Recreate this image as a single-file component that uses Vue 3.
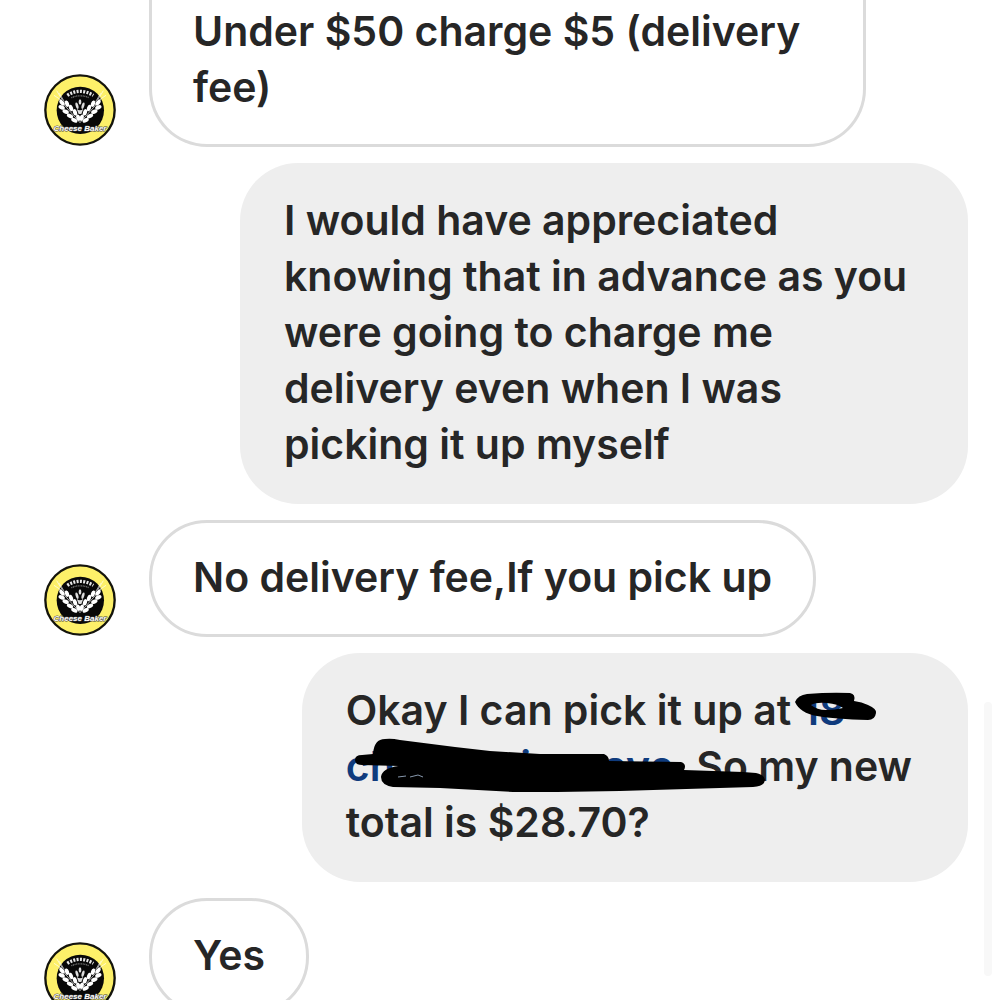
<template>
  <main class="chat">
    <div v-for="msg in messages" :key="msg.id" class="row" :class="msg.from">
      <svg v-if="msg.from === 'shop'" class="avatar" viewBox="0 0 216 216" role="img" aria-label="Cheese Baker">
        <circle cx="108" cy="108" r="104" fill="#fdf069" stroke="#14140c" stroke-width="7" />
        <circle cx="109" cy="109" r="71" fill="#080808" />
        <!-- crown of grains -->
        <path d="M70 64 Q108 40 148 64" fill="none" stroke="#e8e8e8" stroke-width="10" stroke-dasharray="6 4" />
        <path d="M82 71 Q108 60 135 71" fill="none" stroke="#777" stroke-width="4" stroke-dasharray="3 2" />
        <!-- wheat ears, the right one mirrored -->
        <g v-for="side in ears" :key="side" :transform="side" fill="#fff">
          <path d="M108 146 L46 76 M54 80 L30 64 M55 78 L38 50 M61 83 L46 58" stroke="#fff" stroke-width="2" fill="none" />
          <ellipse
            v-for="leaf in leaves"
            :key="leaf.join()"
            :cx="leaf[0]"
            :cy="leaf[1]"
            rx="10"
            ry="6"
            :transform="`rotate(${leaf[2]} ${leaf[0]} ${leaf[1]})`"
          />
        </g>
        <!-- small centre ear -->
        <g fill="#ddd">
          <ellipse cx="108" cy="84" rx="4" ry="8" />
          <ellipse cx="99" cy="95" rx="4" ry="10" transform="rotate(-15 99 95)" />
          <ellipse cx="117" cy="95" rx="4" ry="10" transform="rotate(15 117 95)" />
          <path d="M98 104 Q108 114 118 104 L112 120 H104 Z" />
        </g>
        <text x="108" y="172" class="brand" text-anchor="middle">Cheese Baker</text>
      </svg>

      <div class="bubble" :class="{ cut: msg.cut, address: msg.redacted }">
        <template v-if="msg.redacted">Okay I can pick it up at <a href="#" @click.prevent>18<br>chnnnnninm ave</a>. So my new<br>total is $28.70?
          <svg class="scribble" viewBox="0 0 664 229" aria-hidden="true">
            <g transform="translate(-304 -654)">
              <path
                fill-rule="evenodd"
                d="M795 703 Q798 696 807 695 Q830 693 850 694 Q856 695 854 702 Q862 703 868 706 Q877 710 876 714 Q875 721 868 721 Q835 720 817 717 Q800 714 795 703 Z
                   M811 706 Q816 703 827 704 Q838 705 843 709 Q835 711 826 711 Q817 711 811 706 Z"
              />
              <path
                d="M355 761 Q355 756 362 756 L373 755 Q374 740 385 740 Q391 739 400 741 L455 748 L490 752 L540 755 L604 755 Q609 757 609 762 L681 763 Q687 765 684 771 L743 773 L756 774 Q765 776 765 781 Q764 788 753 788 L620 792 L557 793 L513 793 L440 789 L393 788 Q381 786 381 778 Q382 769 399 767 L362 766 Q355 766 355 761 Z"
              />
              <path d="M398 778 L406 777 M410 778 L418 776 L423 778" stroke="#8798ad" fill="none" />
            </g>
          </svg>
        </template>
        <template v-else>{{ msg.text }}</template>
      </div>
    </div>
    <div class="scroll-thumb"></div>
  </main>
</template>

<script setup>
const messages = [
  { id: 1, from: 'shop', cut: true, text: 'Under $50 charge $5 (delivery fee)' },
  {
    id: 2,
    from: 'me',
    text: 'I would have appreciated knowing that in advance as you were going to charge me delivery even when I was picking it up myself'
  },
  { id: 3, from: 'shop', text: 'No delivery fee,If you pick up' },
  { id: 4, from: 'me', redacted: true },
  { id: 5, from: 'shop', text: 'Yes' }
]

const ears = ['', 'translate(216 0) scale(-1 1)']

// x, y, angle
const leaves = [
  [54, 86, 50],
  [53, 100, 25],
  [69, 89, 72],
  [65, 113, 25],
  [81, 102, 72],
  [78, 126, 25],
  [93, 115, 72],
  [91, 139, 28],
  [103, 131, 72]
]
</script>

<style>
body {
  margin: 0;
  background: #fff;
}
</style>

<style scoped>
.chat {
  box-sizing: border-box;
  height: 100vh;
  overflow: hidden;
  display: flex;
  flex-direction: column;
  gap: 16px;
  padding: 0 32px 0 44px;
  font-family: Inter, "Liberation Sans", sans-serif;
  font-size: 41px;
  font-weight: 600;
  line-height: 56px;
  color: #262626;
}

.row {
  display: flex;
  flex-shrink: 0;
  align-items: flex-end;
  gap: 33px;
}

.row.me {
  justify-content: flex-end;
}

.avatar {
  flex: none;
  width: 72px;
  height: 72px;
  margin-bottom: 1px;
}

.brand {
  font-family: "Liberation Sans", sans-serif;
  font-size: 24px;
  font-style: italic;
  font-weight: 700;
  fill: #fff;
  stroke: #444;
  stroke-width: 3px;
  paint-order: stroke;
}

.bubble {
  position: relative;
  box-sizing: border-box;
  max-width: calc(100% - 196px);
  padding: 29px 44px 32px;
  border-radius: 58px;
}

.shop .bubble {
  max-width: calc(100% - 207px);
  padding: 26px 41px 29px;
  border: 3px solid #dbdbdb;
}

.me .bubble {
  background: #eee;
}

.me .bubble.address {
  padding-right: 56px;
}

/* the oldest message runs off the top of the view */
.shop .bubble.cut {
  padding-top: 3px;
  border-top: 0;
  border-radius: 0 0 58px 58px;
}

.bubble a {
  color: #0f3b7d;
  text-decoration: none;
}

.scribble {
  position: absolute;
  top: 0;
  right: 0;
  width: 664px;
  height: 229px;
}

.scroll-thumb {
  position: fixed;
  top: 702px;
  right: 8px;
  width: 8px;
  height: 274px;
  border-radius: 4px;
  background: #f8f8f8;
}
</style>
